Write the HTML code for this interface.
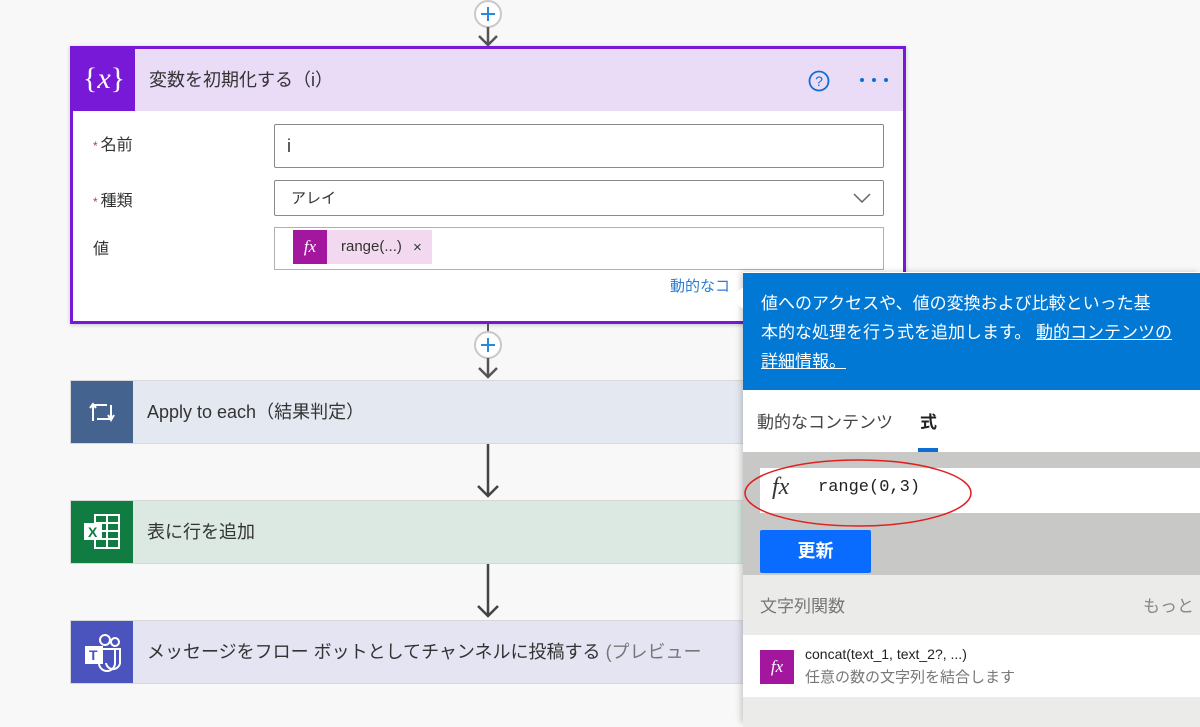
<!DOCTYPE html>
<html><head><meta charset="utf-8">
<style>
*{margin:0;padding:0;box-sizing:border-box}
body{width:1200px;height:723px;overflow:hidden;background:#f8f8f8;position:relative;font-family:"Liberation Sans","Noto Sans CJK JP",sans-serif;color:#333}
.abs{position:absolute}
.line{width:2px;background:#555}
.card{left:70px;top:46px;width:836px;height:278px;border:3px solid #7719d6;background:#fff;box-shadow:0 1px 4px rgba(0,0,0,.2)}
.lbl{font-size:16px;color:#333}
.req{color:#d13438;font-size:12px;margin-right:3px}
.inp{border:1px solid #8a8a8a;border-radius:2px;background:#fff}
.step{left:70px;width:700px;height:64px;border:1px solid #d8d8d8}
.step .ic{position:absolute;left:0;top:0;width:62px;height:62px}
.step .t{position:absolute;left:76px;top:0;line-height:62px;font-size:18px;color:#333;white-space:nowrap}
</style></head><body>

<!-- top connector -->
<svg class="abs" style="left:473px;top:0px" width="30" height="48"><circle cx="15" cy="14" r="13" fill="#fff" stroke="#c8c8c8" stroke-width="2"/><path d="M15 7V21M8 14H22" stroke="#2b88d8" stroke-width="2"/><path d="M15 27V44M6 36L15 45L24 36" stroke="#555" stroke-width="2.5" fill="none"/></svg>

<!-- card -->
<div class="abs card">
  <div class="abs" style="left:0;top:0;width:830px;height:62px;background:#eadbf7"></div>
  <div class="abs" style="left:0;top:0;width:62px;height:62px;background:#7719d6;color:#fff;font-family:'Liberation Serif',serif;font-size:30px;line-height:60px;text-align:center">{<i>x</i>}</div>
  <div class="abs" style="left:76px;top:0;line-height:62px;font-size:18px;color:#333">変数を初期化する（i）</div>
  <svg class="abs" style="left:735px;top:21px" width="22" height="22"><circle cx="11" cy="11" r="9.5" fill="none" stroke="#0f6cd4" stroke-width="1.8"/><text x="11" y="16" text-anchor="middle" font-size="14" fill="#0f6cd4" font-family="Liberation Sans">?</text></svg>
  <svg class="abs" style="left:784px;top:26px" width="34" height="10"><circle cx="5" cy="5" r="2" fill="#0f6cd4"/><circle cx="17" cy="5" r="2" fill="#0f6cd4"/><circle cx="29" cy="5" r="2" fill="#0f6cd4"/></svg>
  <div class="abs lbl" style="left:20px;top:82px"><span class="req">*</span>名前</div>
  <div class="abs lbl" style="left:20px;top:138px"><span class="req">*</span>種類</div>
  <div class="abs lbl" style="left:20px;top:186px">値</div>
  <div class="abs inp" style="left:201px;top:75px;width:610px;height:44px;font-size:18px;line-height:42px;padding-left:12px">i</div>
  <div class="abs inp" style="left:201px;top:131px;width:610px;height:36px;font-size:15px;line-height:36px;padding-left:16px">アレイ
    <svg class="abs" style="right:12px;top:12px" width="18" height="10"><path d="M1 1L9 9L17 1" stroke="#666" stroke-width="1.5" fill="none"/></svg></div>
  <div class="abs" style="left:201px;top:178px;width:610px;height:43px;border:1px solid #b0b0b0;background:#fff">
    <div class="abs" style="left:18px;top:2px;width:139px;height:34px;background:#f2d9ef"></div>
    <div class="abs" style="left:18px;top:2px;width:34px;height:34px;background:#a3169e;color:#fff;font-family:'Liberation Serif',serif;font-style:italic;font-size:17px;line-height:34px;text-align:center">fx</div>
    <div class="abs" style="left:66px;top:2px;line-height:34px;font-size:15px">range(...)</div>
    <div class="abs" style="left:138px;top:3px;line-height:34px;font-size:15px">×</div>
  </div>
  <div class="abs" style="left:597px;top:226px;font-size:15px;color:#2b7cd3">動的なコ</div>
</div>

<!-- middle connector -->
<svg class="abs" style="left:473px;top:324px" width="30" height="56"><path d="M15 0V8" stroke="#555" stroke-width="2"/><circle cx="15" cy="21" r="13" fill="#fff" stroke="#c8c8c8" stroke-width="2"/><path d="M15 14V28M8 21H22" stroke="#2b88d8" stroke-width="2"/><path d="M15 34V53M6 44L15 53L24 44" stroke="#555" stroke-width="2.5" fill="none"/></svg>

<!-- steps -->
<div class="abs step" style="top:380px;background:#e4e8f0">
  <div class="ic" style="background:#44648f">
    <svg style="position:absolute;left:16px;top:20px" width="30" height="22"><path d="M6 20V4H20M3 7L6 3L9 7M10 18H24V4M21 14L24 19L27 14" stroke="#fff" stroke-width="2" fill="none"/></svg>
  </div>
  <div class="t">Apply to each（結果判定）</div>
</div>
<svg class="abs" style="left:474px;top:444px" width="28" height="56"><path d="M14 0V52M4 42L14 52L24 42" stroke="#444" stroke-width="2.5" fill="none"/></svg>
<div class="abs step" style="top:500px;background:#dbe9e2">
  <div class="ic" style="background:#107c41">
    <svg style="position:absolute;left:12px;top:13px" width="40" height="36"><rect x="12" y="1" width="24" height="33" fill="none" stroke="#fff" stroke-width="2"/><path d="M12 9H36M12 17H36M12 25H36M24 1V34" stroke="#fff" stroke-width="2"/><rect x="1" y="9" width="18" height="17" fill="#fff"/><text x="5" y="23" font-size="14" font-weight="bold" fill="#107c41" font-family="Liberation Sans">X</text></svg>
  </div>
  <div class="t">表に行を追加</div>
</div>
<svg class="abs" style="left:474px;top:564px" width="28" height="56"><path d="M14 0V52M4 42L14 52L24 42" stroke="#444" stroke-width="2.5" fill="none"/></svg>
<div class="abs step" style="top:620px;background:#e4e4f2">
  <div class="ic" style="background:#4b53bc">
    <svg style="position:absolute;left:12px;top:12px" width="40" height="40"><circle cx="32" cy="9" r="4" fill="none" stroke="#fff" stroke-width="2"/><circle cx="22" cy="7" r="5" fill="none" stroke="#fff" stroke-width="2"/><path d="M14 16H37V28A7 7 0 0 1 23 30" fill="none" stroke="#fff" stroke-width="2"/><path d="M16 16V30A8 8 0 0 0 32 30V16" fill="none" stroke="#fff" stroke-width="2"/><rect x="2" y="13" width="18" height="18" fill="#fff"/><text x="6" y="27" font-size="14" font-weight="bold" fill="#4b53bc" font-family="Liberation Sans">T</text></svg>
  </div>
  <div class="t">メッセージをフロー ボットとしてチャンネルに投稿する <span style="color:#777">(プレビュー</span></div>
</div>

<!-- popup -->
<div class="abs" style="left:743px;top:272px;width:457px;height:451px;background:#fff;box-shadow:-2px 0 6px rgba(0,0,0,.2)">
  <svg class="abs" style="left:-14px;top:14px" width="16" height="24"><path d="M16 0L0 12L16 24Z" fill="#fff"/></svg>
  <div class="abs" style="left:0;top:1px;width:457px;height:117px;background:#0078d4;color:#fff;font-size:17px;line-height:29px;padding:16px 0 0 18px;white-space:nowrap">値へのアクセスや、値の変換および比較といった基<br>本的な処理を行う式を追加します。 <u>動的コンテンツの</u><br><u>詳細情報。</u></div>
  <div class="abs" style="left:14px;top:136px;font-size:17px;color:#444">動的なコンテンツ</div>
  <div class="abs" style="left:177px;top:136px;font-size:17px;color:#222;font-weight:bold">式</div>
  <div class="abs" style="left:175px;top:176px;width:20px;height:4px;background:#0f6cd4"></div>
  <div class="abs" style="left:0;top:180px;width:457px;height:123px;background:#c8c8c6"></div>
  <div class="abs" style="left:17px;top:196px;width:440px;height:45px;background:#fff">
    <span class="abs" style="left:12px;top:6px;font-family:'Liberation Serif',serif;font-style:italic;font-size:24px;color:#333">fx</span>
    <span class="abs" style="left:58px;top:10px;font-family:'Liberation Mono',monospace;font-size:17px;color:#222">range(0,3)</span>
  </div>
  <div class="abs" style="left:17px;top:258px;width:111px;height:43px;background:#0a6cff;border-radius:2px;color:#fff;font-weight:bold;font-size:18px;text-align:center;line-height:43px">更新</div>
  <div class="abs" style="left:0;top:303px;width:457px;height:60px;background:#ebebea"></div>
  <div class="abs" style="left:17px;top:320px;font-size:17px;color:#777">文字列関数</div>
  <div class="abs" style="left:400px;top:320px;font-size:17px;color:#888;white-space:nowrap">もっと</div>
  <div class="abs" style="left:17px;top:378px;width:34px;height:34px;background:#a3169e;color:#fff;font-family:'Liberation Serif',serif;font-style:italic;font-size:17px;line-height:34px;text-align:center">fx</div>
  <div class="abs" style="left:62px;top:374px;font-size:14px;color:#222">concat(text_1, text_2?, ...)</div>
  <div class="abs" style="left:62px;top:394px;font-size:15px;color:#777">任意の数の文字列を結合します</div>
  <div class="abs" style="left:0;top:425px;width:457px;height:30px;background:#ebebea"></div>
</div>

<!-- red ellipse annotation -->
<svg class="abs" style="left:740px;top:455px" width="245" height="80"><ellipse cx="118" cy="38" rx="113" ry="33" fill="none" stroke="#e02020" stroke-width="1.5"/></svg>

</body></html>
